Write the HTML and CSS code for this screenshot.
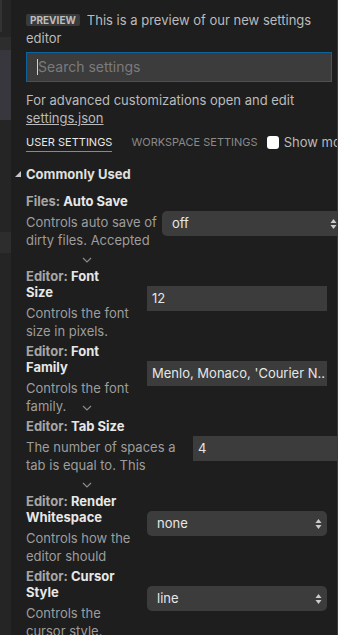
FILE: index.html
```html
<!DOCTYPE html>
<html>
<head>
  <meta name="viewport" content="width=device-width, initial-scale=1.0">
  <title>Settings</title>
  <link rel="stylesheet" href="styles.css">
</head>
<body>
  <div class="window">
    <div class="sidebar">
      <div class="side-tab"></div>
      <div class="side-row side-row-a"></div>
      <div class="side-row side-row-b"></div>
      <div class="side-row side-row-c"></div>
    </div>

    <div class="editor">
      <div class="preview"><span class="badge">PREVIEW</span>This is a preview of our new settings editor</div>

      <div class="search"><span class="caret"></span><span class="placeholder">Search settings</span></div>

      <div class="advanced">For advanced customizations open and edit<br><a class="link">settings.json</a></div>

      <div class="tabs">
        <span class="tab active">USER SETTINGS</span>
        <span class="tab">WORKSPACE SETTINGS</span>
        <span class="check"></span>
        <span class="show-more">Show modified only</span>
      </div>

      <div class="group-title">
        <svg class="twistie" width="6" height="6" viewBox="0 0 6 6"><path d="M6 0V6H0z" fill="#c5c5c5"/></svg>
        Commonly Used
      </div>

      <div class="setting">
        <div class="info info-autosave">
          <div class="title"><span class="cat">Files:</span> Auto Save</div>
          <div class="desc">Controls auto save of<br>dirty files. Accepted</div>
          <div class="more"><svg width="10" height="6" viewBox="0 0 10 6"><path d="M1 1l4 4 4-4" fill="none" stroke="#8a8a8a" stroke-width="1.2"/></svg></div>
        </div>
        <div class="control select">off<svg class="arrows" width="7" height="12" viewBox="0 0 7 12"><path d="M3.5 1L6.5 5H0.5zM3.5 11L6.5 7H0.5z" fill="#cccccc"/></svg></div>
      </div>

      <div class="setting">
        <div class="info info-narrow">
          <div class="title"><span class="cat">Editor:</span> Font<br>Size</div>
          <div class="desc">Controls the font<br>size in pixels.</div>
        </div>
        <div class="control input">12</div>
      </div>

      <div class="setting">
        <div class="info info-narrow">
          <div class="title"><span class="cat">Editor:</span> Font<br>Family</div>
          <div class="desc">Controls the font<br>family.<svg class="more-inline" width="10" height="6" viewBox="0 0 10 6"><path d="M1 1l4 4 4-4" fill="none" stroke="#8a8a8a" stroke-width="1.2"/></svg></div>
        </div>
        <div class="control input">Menlo, Monaco, 'Courier N..</div>
      </div>

      <div class="setting">
        <div class="info info-tab">
          <div class="title"><span class="cat">Editor:</span> Tab Size</div>
          <div class="desc">The number of spaces a<br>tab is equal to. This</div>
          <div class="more"><svg width="10" height="6" viewBox="0 0 10 6"><path d="M1 1l4 4 4-4" fill="none" stroke="#8a8a8a" stroke-width="1.2"/></svg></div>
        </div>
        <div class="control input">4</div>
      </div>

      <div class="setting">
        <div class="info info-narrow">
          <div class="title"><span class="cat">Editor:</span> Render<br>Whitespace</div>
          <div class="desc">Controls how the<br>editor should</div>
        </div>
        <div class="control select">none<svg class="arrows" width="7" height="12" viewBox="0 0 7 12"><path d="M3.5 1L6.5 5H0.5zM3.5 11L6.5 7H0.5z" fill="#cccccc"/></svg></div>
      </div>

      <div class="setting">
        <div class="info info-narrow">
          <div class="title"><span class="cat">Editor:</span> Cursor<br>Style</div>
          <div class="desc">Controls the<br>cursor style.</div>
        </div>
        <div class="control select">line<svg class="arrows" width="7" height="12" viewBox="0 0 7 12"><path d="M3.5 1L6.5 5H0.5zM3.5 11L6.5 7H0.5z" fill="#cccccc"/></svg></div>
      </div>
    </div>
  </div>
</body>
</html>
```

FILE: styles.css
```css
body {
  margin: 0;
  background: #1e1e1e;
  font-family: "Inter", "Liberation Sans", sans-serif;
  overflow: hidden;
}
.window {
  display: flex;
  height: 635px;
}
.sidebar {
  width: 11px;
  flex: none;
  background: #252526;
  display: flex;
  flex-direction: column;
}
.side-tab {
  width: 2px;
  height: 32px;
  background: #333333;
}
.side-row-a {
  height: 13px;
  margin-top: 5px;
  background: #2d2d2d;
}
.side-row-b {
  height: 70px;
  background: #37373d;
}
.side-row-c {
  height: 21px;
  margin-top: 112px;
  background: #2d2d2d;
}
.editor {
  flex: 1;
  min-width: 0;
  overflow: hidden;
  border-right: 1px solid #3a3a3a;
  padding: 11px 5px 0 15px;
  color: #bbbbbb;
  font-size: 13px;
  line-height: 18px;
}
.badge {
  display: inline-block;
  font-size: 10px;
  font-weight: 700;
  line-height: 12px;
  padding: 0 4px;
  margin-right: 7px;
  border-radius: 2px;
  background: #3a3a3a;
  color: #bdbdbd;
  vertical-align: 1px;
}
.search {
  margin-top: 5px;
  height: 28px;
  border: 1px solid #0e639c;
  background: #3c3c3c;
  display: flex;
  align-items: center;
  padding-left: 10px;
}
.caret {
  width: 1px;
  height: 16px;
  background: #d0d0d0;
}
.placeholder {
  font-size: 14px;
  color: #7b7b7b;
}
.advanced {
  margin-top: 9px;
}
.link {
  color: #bbbbbb;
  text-decoration: underline;
}
.tabs {
  margin-top: 8px;
  display: flex;
  align-items: center;
  white-space: nowrap;
}
.tab {
  font-size: 11px;
  line-height: 14px;
  padding-bottom: 2px;
  border-bottom: 1px solid transparent;
  color: #8a8a8a;
  margin-right: 19px;
}
.tab.active {
  color: #e7e7e7;
  border-bottom-color: #8a8a8a;
}
.check {
  flex: none;
  width: 12px;
  height: 13px;
  border-radius: 3px;
  background: #ffffff;
  margin: -2px 5px 0 -10px;
}
.show-more {
  margin-top: -3px;
}
.group-title {
  margin: 14px 0 11px;
  display: flex;
  align-items: center;
  font-weight: 700;
  line-height: 16px;
  color: #e0e0e0;
}
.twistie {
  margin: 0 5px 0 -11px;
}
.setting {
  display: flex;
  align-items: center;
  margin-bottom: 3px;
}
.info {
  flex: none;
  white-space: nowrap;
}
.info-autosave {
  width: 136px;
}
.info-narrow {
  width: 121px;
}
.info-tab {
  width: 167px;
}
.title {
  font-weight: 700;
  line-height: 16px;
  color: #e7e7e7;
}
.cat {
  color: #a6a6a6;
}
.desc {
  margin-top: 4px;
  color: #9d9d9d;
}
.more {
  height: 16px;
  padding-left: 56px;
}
.more-inline {
  margin-left: 16px;
}
.control {
  flex: none;
  width: 180px;
  height: 25px;
  margin-bottom: 11px;
  box-sizing: border-box;
  background: #3c3c3c;
  color: #e6e6e6;
  line-height: 25px;
  white-space: nowrap;
  position: relative;
}
.input {
  padding-left: 5px;
}
.select {
  padding-left: 10px;
  border-radius: 5px;
}
.arrows {
  position: absolute;
  right: 5px;
  top: 7px;
}
```
